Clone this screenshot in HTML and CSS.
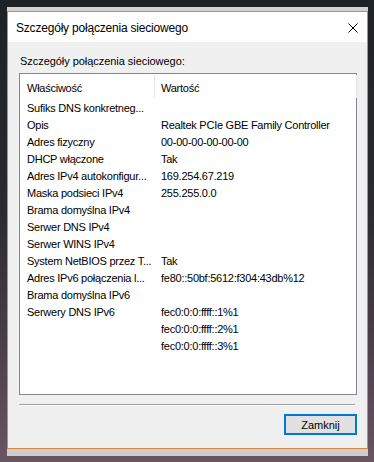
FILE: index.html
```html
<!DOCTYPE html>
<html lang="pl">
<head>
    <meta charset="UTF-8">
    <meta name="viewport" content="width=device-width, initial-scale=1.0">
    <title>Szczegóły połączenia sieciowego</title>
    <link rel="stylesheet" href="styles.css">
</head>
<body>
    <div class="window">
        <div class="titlebar">
            <span class="title">Szczegóły połączenia sieciowego</span>
            <svg class="close" width="10" height="10" viewBox="0 0 10 10">
                <path d="M0.5 0.5 L9.5 9.5 M9.5 0.5 L0.5 9.5" stroke="#000" stroke-width="1" fill="none"/>
            </svg>
        </div>

        <div class="content">
            <p class="caption">Szczegóły połączenia sieciowego:</p>

            <!-- property list -->
            <div class="listbox">
                <div class="list-head">
                    <div class="col-name">Właściwość</div>
                    <div class="col-value">Wartość</div>
                </div>
                <div class="list-rows">
                    <div class="cell">Sufiks DNS konkretneg...</div><div class="cell val"></div>
                    <div class="cell">Opis</div><div class="cell val">Realtek PCIe GBE Family Controller</div>
                    <div class="cell">Adres fizyczny</div><div class="cell val">00-00-00-00-00-00</div>
                    <div class="cell">DHCP włączone</div><div class="cell val">Tak</div>
                    <div class="cell">Adres IPv4 autokonfigur...</div><div class="cell val">169.254.67.219</div>
                    <div class="cell">Maska podsieci IPv4</div><div class="cell val">255.255.0.0</div>
                    <div class="cell">Brama domyślna IPv4</div><div class="cell val"></div>
                    <div class="cell">Serwer DNS IPv4</div><div class="cell val"></div>
                    <div class="cell">Serwer WINS IPv4</div><div class="cell val"></div>
                    <div class="cell">System NetBIOS przez T...</div><div class="cell val">Tak</div>
                    <div class="cell">Adres IPv6 połączenia l...</div><div class="cell val">fe80::50bf:5612:f304:43db%12</div>
                    <div class="cell">Brama domyślna IPv6</div><div class="cell val"></div>
                    <div class="cell">Serwery DNS IPv6</div><div class="cell val">fec0:0:0:ffff::1%1</div>
                    <div class="cell"></div><div class="cell val">fec0:0:0:ffff::2%1</div>
                    <div class="cell"></div><div class="cell val">fec0:0:0:ffff::3%1</div>
                </div>
            </div>

            <div class="separator"></div>

            <div class="buttons">
                <button type="button" class="btn">Zamknij</button>
            </div>
        </div>
    </div>
</body>
</html>
```

FILE: styles.css
```css
body {
    margin: 0;
    height: 462px;
    overflow: hidden;
    font-family: 'Liberation Sans', Arial, sans-serif;
    font-size: 11px;
    color: #000;
    background: linear-gradient(180deg, #1d2227 0%, #2a2a30 45%, #4b3f4a 75%, #6a5563 100%);
    padding-top: 11px;
    box-sizing: border-box;
}

.window {
    margin-left: 7px;
    width: 361px;
    height: 438px;
    box-sizing: border-box;
    border: 1px solid #e3823a;
    background-color: #f0f0f0;
    display: flex;
    flex-direction: column;
    box-shadow: 0 -4px 0 #d2d2d2, 0 7px 0 #cdcdcd;
}

.titlebar {
    height: 30px;
    background-color: #fff;
    display: flex;
    align-items: center;
    justify-content: space-between;
    padding: 0 9px 0 8px;
}

.title {
    font-size: 12px;
    letter-spacing: -0.2px;
    padding-top: 1px;
}

.close {
    display: block;
    margin-top: 1px;
}

.content {
    flex: 1;
    display: flex;
    flex-direction: column;
    padding: 0 10px 13px 11px;
}

.caption {
    margin: 13px 0 5px 1px;
    line-height: 13px;
    letter-spacing: -0.05px;
}

.listbox {
    height: 322px;
    box-sizing: border-box;
    border: 1px solid #828790;
    background-color: #fff;
    letter-spacing: -0.25px;
}

.list-head {
    display: grid;
    grid-template-columns: 135px 202px;
    height: 24px;
    padding-top: 1px;
    box-sizing: border-box;
}

.list-head div {
    line-height: 23px;
    height: 23px;
    padding-top: 2px;
    border-right: 1px solid #e5e5e5;
    box-sizing: border-box;
}

.col-name {
    padding-left: 7px;
}

.col-value {
    padding-left: 6px;
}

.list-rows {
    display: grid;
    grid-template-columns: 135px 1fr;
    grid-auto-rows: 17px;
    padding-top: 2px;
}

.cell {
    line-height: 17px;
    padding-left: 7px;
    white-space: nowrap;
    overflow: hidden;
}

.cell.val {
    padding-left: 6px;
}

.separator {
    margin: 9px 2px 0 0;
    border-top: 1px solid #a0a0a0;
    border-bottom: 1px solid #fff;
}

.buttons {
    display: flex;
    justify-content: flex-end;
    margin-top: 8px;
}

.btn {
    width: 73px;
    height: 21px;
    margin: 0;
    padding: 0;
    border: 2px solid #0078d7;
    background-color: #e1e1e1;
    font-family: 'Liberation Sans', Arial, sans-serif;
    font-size: 11px;
    color: #000;
}
```
